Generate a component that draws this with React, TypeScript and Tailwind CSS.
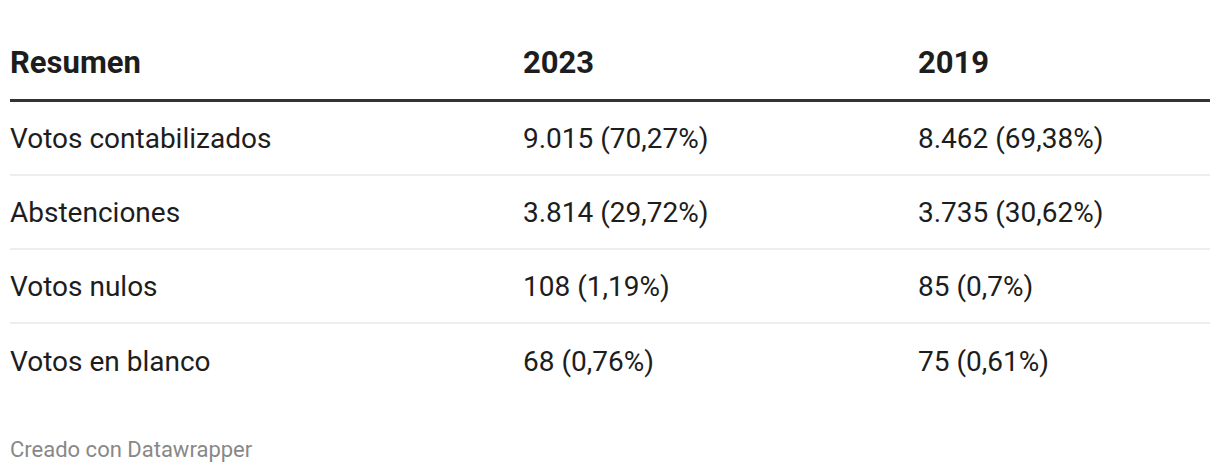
const rows = [
  { label: "Votos contabilizados", a: "9.015 (70,27%)", b: "8.462 (69,38%)" },
  { label: "Abstenciones", a: "3.814 (29,72%)", b: "3.735 (30,62%)" },
  { label: "Votos nulos", a: "108 (1,19%)", b: "85 (0,7%)" },
  { label: "Votos en blanco", a: "68 (0,76%)", b: "75 (0,61%)" },
];

export default function App() {
  return (
    <div className="w-[1220px] h-[472px] bg-white px-[10px] pt-[27px] text-[#1d1d1d] font-['Roboto',sans-serif]">
      {/* header */}
      <div className="grid grid-cols-[513px_395px_1fr] h-[75px] items-center border-b-[3px] border-[#333] text-[31px] font-bold">
        <div>Resumen</div>
        <div>2023</div>
        <div>2019</div>
      </div>

      {rows.map((r, i) => (
        <div
          key={i}
          className={`grid grid-cols-[513px_395px_1fr] h-[74px] items-center pt-[1px] text-[28px] ${
            i < rows.length - 1 ? "border-b-2 border-[#eeeeee]" : ""
          }`}
        >
          <div>{r.label}</div>
          <div>{r.a}</div>
          <div>{r.b}</div>
        </div>
      ))}

      <div className="mt-[39px] text-[22px] leading-[26px] text-[#888888]">Creado con Datawrapper</div>
    </div>
  );
}
